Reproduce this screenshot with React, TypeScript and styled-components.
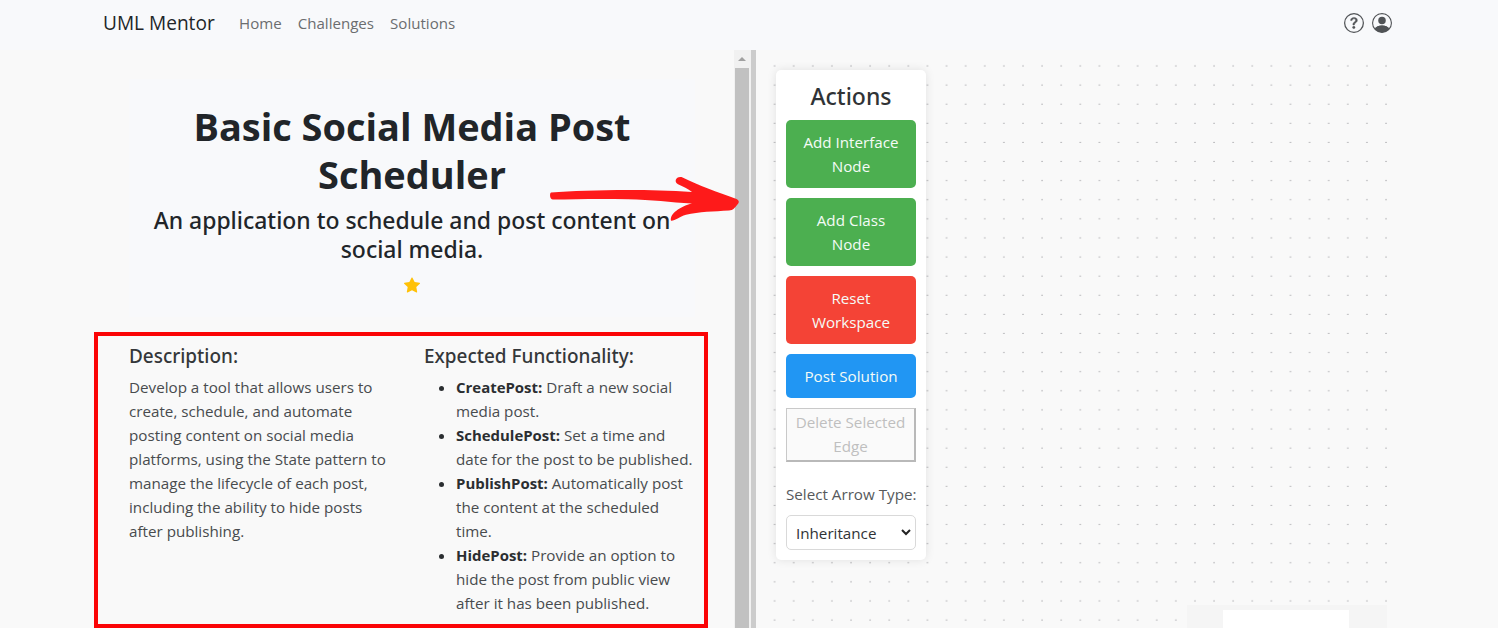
import React from "react";
import styled, { createGlobalStyle } from "styled-components";

const GlobalStyle = createGlobalStyle`
  *, *::before, *::after { box-sizing: border-box; }
  body {
    margin: 0;
    background: #f9f9f9;
    color: #212529;
    font-family: "Open Sans", "Noto Sans", sans-serif;
    font-size: 15.2px;
    line-height: 24px;
    overflow: hidden;
  }
`;

const Page = styled.div`
  position: relative;
  display: flex;
  flex-direction: column;
  width: 1498px;
  height: 628px;
  overflow: hidden;
`;

const Navbar = styled.header`
  display: flex;
  align-items: center;
  flex: 0 0 50px;
  padding: 0 106px 5px 103px;
  background: #f8f9fb;
`;

const Brand = styled.a`
  width: 136px;
  font-size: 19.1px;
  line-height: 30px;
`;

const NavLinks = styled.nav`
  display: flex;
  flex: 1;
  gap: 16px;
  color: #6b6d6f;
`;

const NavLink = styled.a`
  font-size: 15.1px;
`;

const NavIcons = styled.div`
  display: flex;
  gap: 8px;
  color: #505356;
  svg { display: block; }
`;

const Workspace = styled.main`
  display: flex;
  flex: 1;
  min-height: 0;
`;

const ChallengePane = styled.section`
  display: flex;
  flex-direction: column;
  width: 734px;
  padding: 29px 39px 0 129px;
`;

const Hero = styled.div`
  display: flex;
  flex-direction: column;
  align-items: center;
  height: 238px;
  padding-top: 23px;
  background: #f8f9fb;
  text-align: center;
  white-space: nowrap;
`;

const Title = styled.h1`
  margin: 0 0 8px;
  font-size: 37.95px;
  line-height: 48px;
  font-weight: 700;
`;

const Subtitle = styled.h2`
  margin: 0 0 9px;
  font-family: "Noto Sans", sans-serif;
  font-size: 22.95px;
  line-height: 28.8px;
  font-weight: 500;
`;

const Details = styled.div`
  display: grid;
  grid-template-columns: 295px 1fr;
  padding-top: 27px;
  color: #484b4e;
  white-space: nowrap;
`;

const DetailHeading = styled.h3`
  margin: 0 0 7px;
  font-family: "Noto Sans", sans-serif;
  font-size: 18.95px;
  line-height: 24px;
  font-weight: 500;
  color: #34373a;
`;

const Paragraph = styled.p`
  margin: 0;
`;

const FeatureList = styled.ul`
  margin: 0;
  padding-left: 32px;
  strong { font-size: 14.95px; color: #2b2e31; }
  li::marker { color: #2b2e31; }
`;

const ScrollTrack = styled.div`
  display: flex;
  flex-direction: column;
  width: 17px;
  padding: 0 2px 0 1px;
  background: #f1f1f1;
`;

const ScrollButton = styled.div`
  display: flex;
  align-items: center;
  justify-content: center;
  flex: 0 0 17.5px;
`;

const ScrollThumb = styled.div`
  flex: 1;
  background: #c1c1c1;
`;

const Splitter = styled.div`
  width: 5px;
  background: #cccccc;
`;

const Canvas = styled.section`
  position: relative;
  flex: 1;
`;

const DotGrid = styled.svg`
  position: absolute;
  left: 9px;
  top: 6px;
`;

const Minimap = styled.div`
  position: absolute;
  left: 431px;
  top: 555px;
  width: 200px;
  height: 23px;
  padding: 5px 38px 0 36px;
  background: #f5f5f5;
`;

const MinimapView = styled.div`
  height: 18px;
  background: #ffffff;
`;

const ActionPanel = styled.aside`
  position: relative;
  display: flex;
  flex-direction: column;
  width: 150px;
  height: 490px;
  margin: 20px 0 0 20px;
  padding: 12px 10px 10px;
  border-radius: 5px;
  background: #ffffff;
  box-shadow: 0 0 10px rgba(0, 0, 0, 0.1);
`;

const PanelTitle = styled.h2`
  margin: 0 0 8px;
  font-family: "Noto Sans", sans-serif;
  font-size: 23px;
  line-height: 29.5px;
  font-weight: 500;
  text-align: center;
  color: #303336;
`;

const ActionButton = styled.button<{ $color: string }>`
  margin: 0 0 10px;
  padding: 10px 0;
  border: 0;
  border-radius: 5px;
  background: ${(p) => p.$color};
  color: #f4fbf6;
  font: inherit;
  line-height: 24px;
  flex: none;
`;

const DeleteButton = styled.button`
  height: 54px;
  flex: none;
  padding: 1px 0;
  border-width: 1px 2px 2px 1px;
  border-style: solid;
  border-color: #c9c9c9 #b9b9b9 #b9b9b9 #c9c9c9;
  background: #fafafa;
  color: #bfbfbf;
  font: inherit;
`;

const FieldLabel = styled.label`
  margin: 20.5px 0 9px;
  text-align: center;
  white-space: nowrap;
  color: #56595c;
`;

const SelectBox = styled.div`
  display: flex;
  align-items: center;
  justify-content: space-between;
  height: 35px;
  padding: 0 4px 0 9px;
  border: 1px solid #d9d9d9;
  border-radius: 5px;
  color: #303236;
`;

const Highlight = styled.div`
  position: absolute;
  left: 93.5px;
  top: 331.5px;
  width: 614px;
  height: 296px;
  border: 4px solid #fb0406;
`;

const Arrow = styled.svg`
  position: absolute;
  left: 540px;
  top: 160px;
`;

const GREEN = "#4caf50";

const features: { name: string; lines: string[] }[] = [
  { name: "CreatePost:", lines: ["Draft a new social", "media post."] },
  { name: "SchedulePost:", lines: ["Set a time and", "date for the post to be published."] },
  { name: "PublishPost:", lines: ["Automatically post", "the content at the scheduled", "time."] },
  { name: "HidePost:", lines: ["Provide an option to", "hide the post from public view", "after it has been published."] },
];

function Lines({ items }: { items: string[] }) {
  return (
    <>
      {items.map((line, i) => (
        <React.Fragment key={line}>
          {i > 0 && <br />}
          {line}
        </React.Fragment>
      ))}
    </>
  );
}

export default function App() {
  return (
    <Page>
      <GlobalStyle />
      <Navbar>
        <Brand>UML Mentor</Brand>
        <NavLinks>
          <NavLink>Home</NavLink>
          <NavLink>Challenges</NavLink>
          <NavLink>Solutions</NavLink>
        </NavLinks>
        <NavIcons>
          <svg width="20" height="20" viewBox="0 0 16 16" fill="currentColor">
            <path d="M8 15A7 7 0 1 1 8 1a7 7 0 0 1 0 14m0 1A8 8 0 1 0 8 0a8 8 0 0 0 0 16" />
            <path
              stroke="currentColor"
              strokeWidth="0.35"
              d="M5.255 5.786a.237.237 0 0 0 .241.247h.825c.138 0 .248-.113.266-.25.09-.656.54-1.134 1.342-1.134.686 0 1.314.343 1.314 1.168 0 .635-.374.927-.965 1.371-.673.489-1.206 1.06-1.168 1.987l.003.217a.25.25 0 0 0 .25.246h.811a.25.25 0 0 0 .25-.25v-.105c0-.718.273-.927 1.01-1.486.609-.463 1.244-.977 1.244-2.056 0-1.511-1.276-2.241-2.673-2.241-1.267 0-2.655.59-2.75 2.286m1.557 5.763c0 .533.425.927 1.01.927.609 0 1.028-.394 1.028-.927 0-.552-.42-.94-1.029-.94-.584 0-1.009.388-1.009.94"
            />
          </svg>
          <svg width="20" height="20" viewBox="0 0 16 16" fill="currentColor">
            <path d="M11 6a3 3 0 1 1-6 0 3 3 0 0 1 6 0" />
            <path
              fillRule="evenodd"
              d="M0 8a8 8 0 1 1 16 0A8 8 0 0 1 0 8m8-7a7 7 0 0 0-5.468 11.37C3.242 11.226 4.805 10 8 10s4.757 1.225 5.468 2.37A7 7 0 0 0 8 1"
            />
            <path d="M2.4 12.4C3.4 11 5.2 10 8 10s4.600 1 5.600 2.400A7.200 7.200 0 0 1 8 15.500a7.200 7.200 0 0 1-5.600-3.100Z" />
          </svg>
        </NavIcons>
      </Navbar>

      <Workspace>
        <ChallengePane>
          <Hero>
            <Title>
              <Lines items={["Basic Social Media Post", "Scheduler"]} />
            </Title>
            <Subtitle>
              <Lines items={["An application to schedule and post content on", "social media."]} />
            </Subtitle>
            <svg width="16" height="24" viewBox="0 -4 16 24" fill="#ffc107">
              <path d="M3.612 15.443c-.386.198-.824-.149-.746-.592l.83-4.73L.173 6.765c-.329-.314-.158-.888.283-.95l4.898-.696L7.538.792c.197-.39.73-.39.927 0l2.184 4.327 4.898.696c.441.062.612.636.282.95l-3.522 3.356.83 4.73c.078.443-.36.79-.746.592L8 13.187z" />
            </svg>
          </Hero>
          <Details>
            <div>
              <DetailHeading>Description:</DetailHeading>
              <Paragraph>
                <Lines
                  items={[
                    "Develop a tool that allows users to",
                    "create, schedule, and automate",
                    "posting content on social media",
                    "platforms, using the State pattern to",
                    "manage the lifecycle of each post,",
                    "including the ability to hide posts",
                    "after publishing.",
                  ]}
                />
              </Paragraph>
            </div>
            <div>
              <DetailHeading>Expected Functionality:</DetailHeading>
              <FeatureList>
                {features.map((f) => (
                  <li key={f.name}>
                    <strong>{f.name}</strong> <Lines items={f.lines} />
                  </li>
                ))}
              </FeatureList>
            </div>
          </Details>
        </ChallengePane>

        <ScrollTrack>
          <ScrollButton>
            <svg width="8" height="4" viewBox="0 0 8 4">
              <path d="M4 0 L8 4 H0 Z" fill="#a0a0a0" />
            </svg>
          </ScrollButton>
          <ScrollThumb />
        </ScrollTrack>
        <Splitter />

        <Canvas>
          <DotGrid width="623" height="572">
            <defs>
              <pattern id="dots" width="19.107" height="19.107" patternUnits="userSpaceOnUse">
                <circle cx="9.6" cy="9.9" r="0.68" fill="#8f8f94" />
              </pattern>
            </defs>
            <rect width="623" height="572" fill="url(#dots)" />
          </DotGrid>
          <Minimap>
            <MinimapView />
          </Minimap>
          <ActionPanel>
            <PanelTitle>Actions</PanelTitle>
            <ActionButton $color={GREEN}>
              <Lines items={["Add Interface", "Node"]} />
            </ActionButton>
            <ActionButton $color={GREEN}>
              <Lines items={["Add Class", "Node"]} />
            </ActionButton>
            <ActionButton $color="#f44336">
              <Lines items={["Reset", "Workspace"]} />
            </ActionButton>
            <ActionButton $color="#2196f3">Post Solution</ActionButton>
            <DeleteButton>
              <Lines items={["Delete Selected", "Edge"]} />
            </DeleteButton>
            <FieldLabel>Select Arrow Type:</FieldLabel>
            <SelectBox>
              Inheritance
              <svg width="10" height="7" viewBox="0 0 10 7" fill="none" stroke="#222" strokeWidth="2">
                <path d="M1 1 L5 5 L9 1" />
              </svg>
            </SelectBox>
          </ActionPanel>
        </Canvas>
      </Workspace>

      <Highlight />
      <Arrow width="220" height="80" viewBox="540 160 220 80">
        <path
          fill="#fe1a1a"
          d="M551 192.6 C585 190.2 640 188.6 692 192 C688 188.5 683 186.5 678 184.2 C673.5 181.5 676 176 681.5 177 C698 185.5 719 192.5 736.5 199 C740 201 739 203 737 205 C735 207.5 733 210.5 729 210.5 C714 211.5 699 211.5 686 214.8 C679 216.5 675.5 221 671 220.8 C669.5 214 680 206.5 692 203.6 C670 202.5 652 199.6 628 199.3 C600 198.7 575 199.2 553 199.6 C549.5 199.6 549.5 193 551 192.6 Z"
        />
      </Arrow>
    </Page>
  );
}
